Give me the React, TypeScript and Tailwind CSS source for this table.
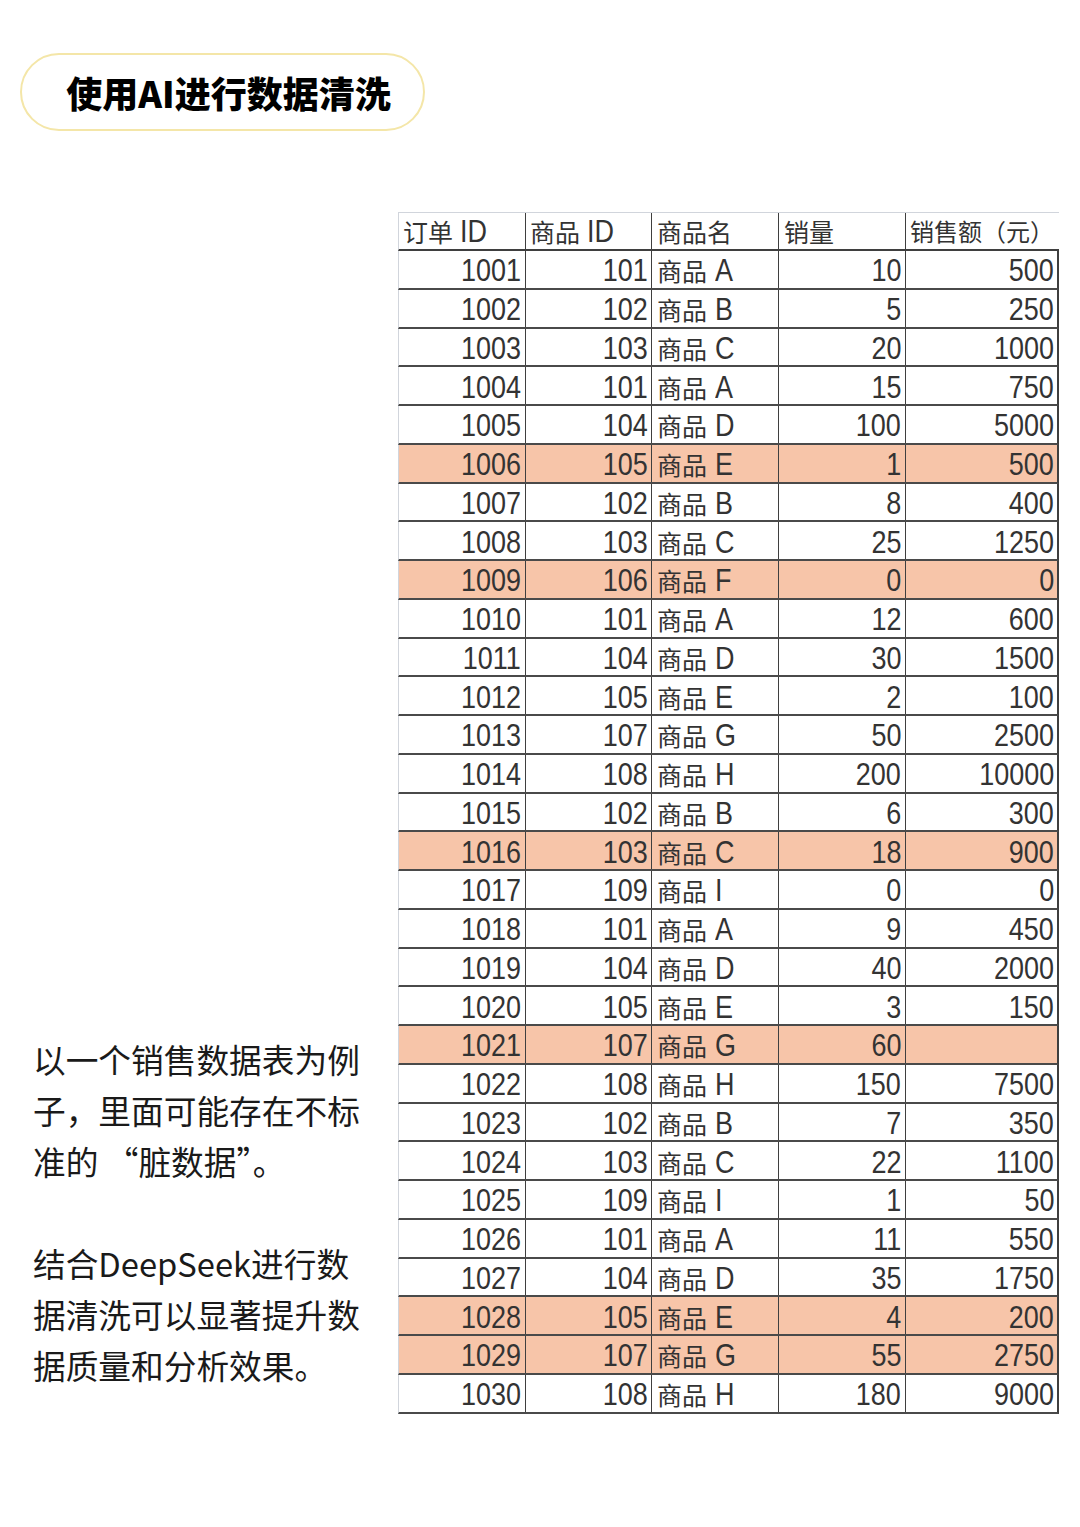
const rows: [string, string, string, string, string, boolean][] = [
  ['1001', '101', 'A', '10', '500', false],
  ['1002', '102', 'B', '5', '250', false],
  ['1003', '103', 'C', '20', '1000', false],
  ['1004', '101', 'A', '15', '750', false],
  ['1005', '104', 'D', '100', '5000', false],
  ['1006', '105', 'E', '1', '500', true],
  ['1007', '102', 'B', '8', '400', false],
  ['1008', '103', 'C', '25', '1250', false],
  ['1009', '106', 'F', '0', '0', true],
  ['1010', '101', 'A', '12', '600', false],
  ['1011', '104', 'D', '30', '1500', false],
  ['1012', '105', 'E', '2', '100', false],
  ['1013', '107', 'G', '50', '2500', false],
  ['1014', '108', 'H', '200', '10000', false],
  ['1015', '102', 'B', '6', '300', false],
  ['1016', '103', 'C', '18', '900', true],
  ['1017', '109', 'I', '0', '0', false],
  ['1018', '101', 'A', '9', '450', false],
  ['1019', '104', 'D', '40', '2000', false],
  ['1020', '105', 'E', '3', '150', false],
  ['1021', '107', 'G', '60', '', true],
  ['1022', '108', 'H', '150', '7500', false],
  ['1023', '102', 'B', '7', '350', false],
  ['1024', '103', 'C', '22', '1100', false],
  ['1025', '109', 'I', '1', '50', false],
  ['1026', '101', 'A', '11', '550', false],
  ['1027', '104', 'D', '35', '1750', false],
  ['1028', '105', 'E', '4', '200', true],
  ['1029', '107', 'G', '55', '2750', true],
  ['1030', '108', 'H', '180', '9000', false],
];

const tableFont = {
  fontFamily: '"Liberation Sans", "Noto Sans CJK SC", sans-serif',
};

const Cjk = ({ children }: { children: React.ReactNode }) => (
  <span className="text-[25px]" style={{ fontFamily: '"Noto Sans CJK SC", sans-serif' }}>
    {children}
  </span>
);

// Excel-style narrow digits
const Num = ({ children, left }: { children: React.ReactNode; left?: boolean }) => (
  <span className={`inline-block scale-x-[0.87] ${left ? 'origin-left' : 'origin-right'}`}>
    {children}
  </span>
);

const HeaderRow = () => (
  <div className="flex h-[39px] border-t border-l border-gray-300 border-b-2 border-b-[#3f3f3f]">
    <div className="flex w-[127px] items-center border-r-[1.5px] border-[#3f3f3f] pl-[4px]">
      <Cjk>订单</Cjk>
      <span className="ml-[7px]">
        <Num left>ID</Num>
      </span>
    </div>
    <div className="flex w-[126px] items-center border-r-[1.5px] border-[#3f3f3f] pl-[4px]">
      <Cjk>商品</Cjk>
      <span className="ml-[7px]">
        <Num left>ID</Num>
      </span>
    </div>
    <div className="flex w-[127px] items-center border-r-[1.5px] border-[#3f3f3f] pl-[5px]">
      <Cjk>商品名</Cjk>
    </div>
    <div className="flex w-[127px] items-center border-r-[1.5px] border-[#3f3f3f] pl-[5px]">
      <Cjk>销量</Cjk>
    </div>
    <div className="flex flex-1 items-center pl-[4px]">
      <span
        className="text-[24px] whitespace-nowrap"
        style={{ fontFamily: '"Noto Sans CJK SC", sans-serif' }}
      >
        销售额（元）
      </span>
    </div>
  </div>
);

const DataRow = ({ row }: { row: (typeof rows)[number] }) => {
  const [order, pid, name, qty, amount, flagged] = row;
  return (
    <div
      className={`flex h-[38.75px] border-l border-l-gray-300 border-r-2 border-r-[#3f3f3f] border-b-2 border-b-[#4a4a4a] ${
        flagged ? 'bg-[#f7c5a9]' : 'bg-white'
      }`}
    >
      <div className="flex w-[127px] items-center justify-end border-r-[1.5px] border-[#3f3f3f] pr-[4px] pt-[3px]">
        <Num>{order}</Num>
      </div>
      <div className="flex w-[126px] items-center justify-end border-r-[1.5px] border-[#3f3f3f] pr-[3px] pt-[3px]">
        <Num>{pid}</Num>
      </div>
      <div className="flex w-[127px] items-center border-r-[1.5px] border-[#3f3f3f] pl-[5px] pt-[3px]">
        <Cjk>商品</Cjk>
        <span className="ml-[8px]">
          <Num left>{name}</Num>
        </span>
      </div>
      <div className="flex w-[127px] items-center justify-end border-r-[1.5px] border-[#3f3f3f] pr-[4px] pt-[3px]">
        <Num>{qty}</Num>
      </div>
      <div className="flex flex-1 items-center justify-end pr-[3px] pt-[3px]">
        <Num>{amount}</Num>
      </div>
    </div>
  );
};

const SalesTable = () => (
  <div className="w-[661px] text-[31px] leading-none text-[#333333]" style={tableFont}>
    <HeaderRow />
    {rows.map((row) => (
      <DataRow key={row[0]} row={row} />
    ))}
  </div>
);

export default function App() {
  return (
    <div
      className="h-[1527px] w-[1080px] bg-white pt-[53px]"
      style={{ fontFamily: '"Noto Sans CJK SC", sans-serif' }}
    >
      <div className="ml-[20px] flex h-[78px] w-[405px] items-center justify-center rounded-full border-2 border-[#f4e6a8] pl-[12px]">
        <span className="text-[36px] font-black text-black">使用AI进行数据清洗</span>
      </div>

      <div className="mt-[81px] flex items-end">
        <div className="w-[398px] pb-[24px] pl-[33px] text-[32.7px] leading-[51px] text-[#1a1a1a] whitespace-nowrap">
          <p>以一个销售数据表为例</p>
          <p>子，里面可能存在不标</p>
          <p>准的 “脏数据”。</p>
          <p className="mt-[51px]">结合DeepSeek进行数</p>
          <p>据清洗可以显著提升数</p>
          <p>据质量和分析效果。</p>
        </div>
        <SalesTable />
      </div>
    </div>
  );
}
